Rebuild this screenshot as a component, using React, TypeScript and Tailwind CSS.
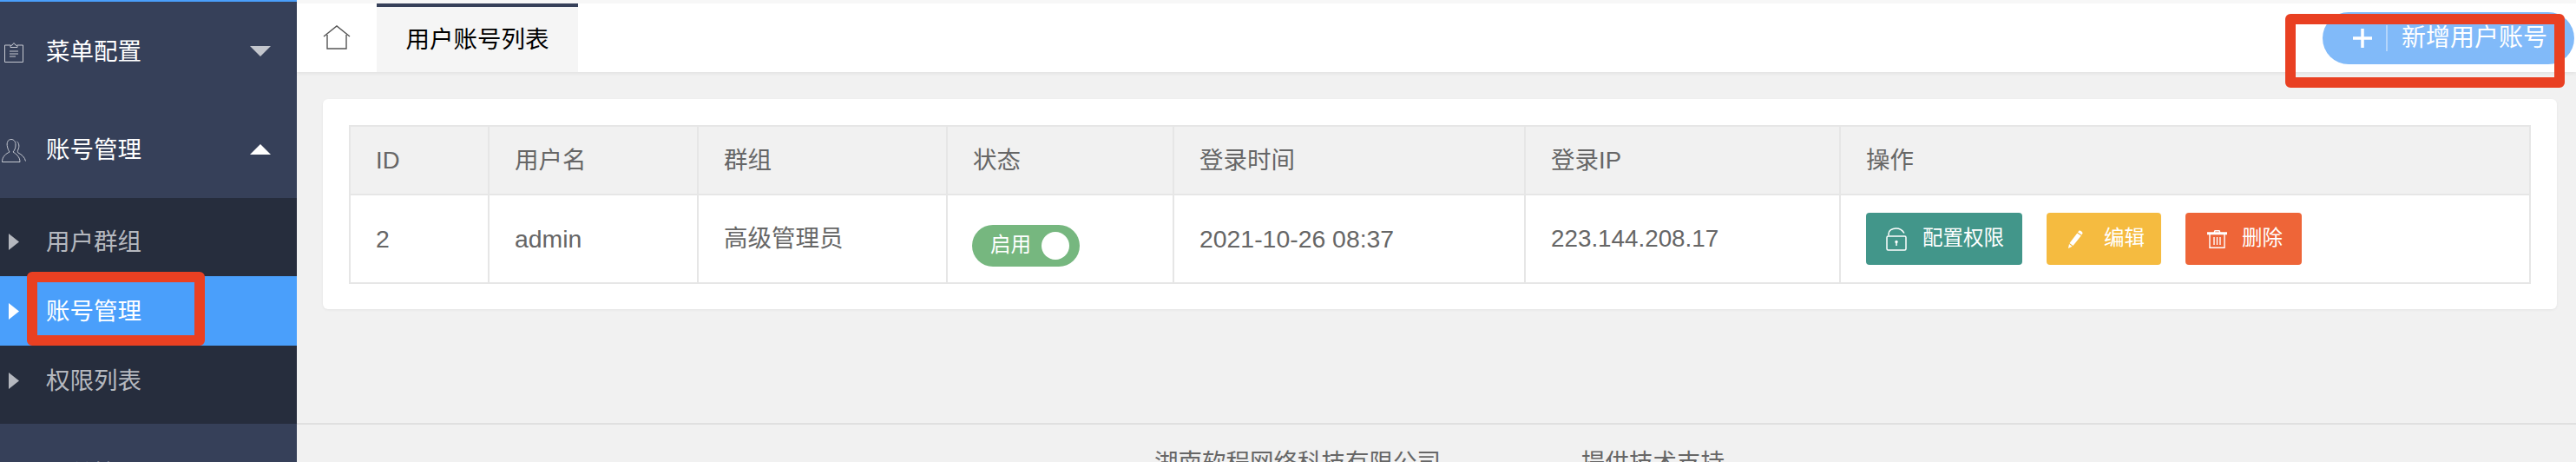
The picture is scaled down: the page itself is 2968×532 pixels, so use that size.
const font = { fontFamily: '"Liberation Sans", "Noto Sans CJK SC", sans-serif' };

const columns = [
  { label: "ID", width: "w-[160px]" },
  { label: "用户名", width: "w-[241px]" },
  { label: "群组", width: "w-[287px]" },
  { label: "状态", width: "w-[261px]" },
  { label: "登录时间", width: "w-[405px]" },
  { label: "登录IP", width: "w-[363px]" },
  { label: "操作", width: "" },
];

function Triangle({ up, dim }: { up?: boolean; dim?: boolean }) {
  return (
    <svg width="24" height="12" viewBox="0 0 24 12" className={dim ? "opacity-70" : ""}>
      <path d={up ? "M12 0 L24 12 H0 Z" : "M0 0 H24 L12 12 Z"} fill="#fff" />
    </svg>
  );
}

function SideIconClip() {
  return (
    <svg width="22" height="23" viewBox="0 0 22 23" fill="none" stroke="#c5c8d0" strokeWidth="1">
      <path d="M7 3 H0.5 V22.5 H21.5 V3 H15" />
      <path d="M7 5.5 V3.5 L9 3 L11 0.5 L13 3 L15 3.5 V5.5 Z" />
      <path d="M6 10 H16 M6 13 H16 M6 16 H13" />
    </svg>
  );
}

function SideIconUser() {
  return (
    <svg width="28" height="27" viewBox="0 0 28 27" fill="none" stroke="#c5c8d0" strokeWidth="1">
      <path d="M11 0.5 C6.5 0.5 5.5 5 6.5 9 C7 11.5 8 13.5 9 15 C5 17 0.5 20 0.5 26.5 H21 C21 20 16 17 13 15 C15 13 16 10 16 7 C16 3 14 0.5 11 0.5 Z" />
      <path d="M17.5 3 C20 4.5 20.5 9 19 12 C18 14 18 15 19 16 C23 18 26.5 21 27.5 25.5" />
    </svg>
  );
}

function SubItem({ label, active }: { label: string; active?: boolean }) {
  return (
    <div className={`flex h-[80px] items-center pl-[10px] ${active ? "bg-[#4a9ffb] text-white" : "text-[#b5b8bf]"}`}>
      <svg width="12" height="19" viewBox="0 0 12 19" className="shrink-0">
        <path d="M0 0 L12 9.5 L0 19 Z" fill={active ? "#fff" : "#b5b8bf"} />
      </svg>
      <span className="mt-[2px] ml-[31px]">{label}</span>
    </div>
  );
}

function Sidebar() {
  return (
    <aside className="flex h-[532px] w-[342px] shrink-0 flex-col overflow-hidden border-t-2 border-[#4a9ffb] bg-[#364059] text-[27.5px] text-white">
      <div className="flex h-[114px] shrink-0 items-center pr-[30px] pl-[5px]">
        <span className="mt-[3px] flex w-[48px] shrink-0"><SideIconClip /></span>
        <span className="mt-[2px] flex-1">菜单配置</span>
        <Triangle dim />
      </div>
      <div className="flex h-[112px] shrink-0 items-center pr-[30px] pl-[2px]">
        <span className="mt-[2px] flex w-[51px] shrink-0"><SideIconUser /></span>
        <span className="mt-[2px] flex-1">账号管理</span>
        <Triangle up />
      </div>
      <div className="flex h-[260px] shrink-0 flex-col bg-[#262d3d] pt-[10px]">
        <SubItem label="用户群组" />
        <SubItem label="账号管理" active />
        <SubItem label="权限列表" />
      </div>
      <div className="pt-[37px] pl-[53px]">订单管理</div>
    </aside>
  );
}

function LockIcon() {
  return (
    <svg width="24" height="27" viewBox="0 0 24 27" fill="none" stroke="#fff" strokeWidth="1.5">
      <path d="M3 9 V7 C3 3.5 7 1 11.5 1 C15.5 1 19 3 21 6.5" />
      <rect x="1" y="10" width="22" height="16" rx="1.5" />
      <circle cx="12" cy="16.5" r="1.7" fill="#fff" stroke="none" />
      <path d="M12 17 V21" />
    </svg>
  );
}

function PencilIcon() {
  return (
    <svg width="17" height="21" viewBox="0 0 17 21" fill="#fff">
      <path d="M12.5 0.5 C14 0 16.5 2 16.5 3.5 L15.5 5.5 L11 2.5 Z" />
      <path d="M10.3 3.5 L14.8 6.5 L5.5 18 L1.5 15 Z" />
      <path d="M1 16 L4.5 18.7 L0 21 Z" />
    </svg>
  );
}

function TrashIcon() {
  return (
    <svg width="23" height="21" viewBox="0 0 23 21" fill="none" stroke="#fff" strokeWidth="1.4">
      <path d="M0.5 4.5 V3 H22.5 V4.5 Z M8 3 L9 0.7 H14 L15 3" />
      <path d="M3 5 V20.3 H20 V5" />
      <path d="M8 8 V17 M11.5 8 V17 M15 8 V17" />
    </svg>
  );
}

function ActionButton({ icon, label, className }: { icon: React.ReactNode; label: string; className: string }) {
  return (
    <button className={`flex h-[60px] items-center rounded-[4px] text-[23.5px] text-white ${className}`}>
      {icon}
      {label}
    </button>
  );
}

function Table() {
  const cell = "border-2 border-[#e6e6e6] pl-[29px]";
  return (
    <table className="w-full table-fixed border-collapse text-[27.5px] text-[#666]">
      <thead>
        <tr className="h-[79px] bg-[#f1f1f1]">
          {columns.map((c) => (
            <th key={c.label} className={`border-2 border-[#e6e6e6] pl-[29px] text-left font-normal ${c.width}`}>
              {c.label}
            </th>
          ))}
        </tr>
      </thead>
      <tbody>
        <tr className="h-[102px]">
          <td className={`${cell} text-[28.4px]`}>2</td>
          <td className={`${cell} text-[28.4px]`}>admin</td>
          <td className={cell}>高级管理员</td>
          <td className="border-2 border-[#e6e6e6] pl-[28px]">
            <div className="mt-[16px] flex h-[48px] w-[124px] items-center rounded-full bg-[#76b77f] pl-[21px] text-[23.5px] text-white">
              启用
              <span className="ml-[12px] h-[32px] w-[32px] rounded-full bg-white" />
            </div>
          </td>
          <td className={`${cell} text-[28.4px]`}>2021-10-26 08:37</td>
          <td className={`${cell} text-[27.8px]`}>223.144.208.17</td>
          <td className={cell}>
            <div className="flex gap-[28px]">
              <ActionButton icon={<LockIcon />} label="配置权限" className="w-[180px] gap-[18px] bg-[#42968a] pl-[23px]" />
              <ActionButton icon={<PencilIcon />} label="编辑" className="w-[132px] gap-[24px] bg-[#f5bb40] pl-[25px]" />
              <ActionButton icon={<TrashIcon />} label="删除" className="w-[134px] gap-[17px] bg-[#ee6538] pl-[25px]" />
            </div>
          </td>
        </tr>
      </tbody>
    </table>
  );
}

export default function App() {
  return (
    <div className="relative flex h-[532px] w-[2968px] overflow-hidden bg-[#f1f1f1]" style={font}>
      <Sidebar />
      <main className="flex min-w-0 flex-1 flex-col">
        <div className="h-[4px] shrink-0 bg-[#f7f7f7]" />
        <header className="flex h-[79px] shrink-0 items-stretch bg-white pl-[30px] shadow-[0_2px_4px_rgba(0,0,0,0.06)]">
          <svg width="32" height="28" viewBox="0 0 32 28" fill="none" stroke="#555" strokeWidth="1.4" className="mt-[25px] shrink-0">
            <path d="M1 13 L16 1 L31 13 M5 11 V27 H27 V11" />
          </svg>
          <div className="ml-[30px] flex w-[232px] items-center justify-center border-t-4 border-[#364059] bg-[#f5f5f5] text-[27.5px] text-black">
            用户账号列表
          </div>
          <div className="flex-1" />
          <div className="mt-[10px] flex h-[60px] w-[290px] items-center rounded-full bg-[#81baf9] pl-[35px] text-[28px] text-white">
            <svg width="22" height="22" viewBox="0 0 22 22" stroke="#fff" strokeWidth="3.5">
              <path d="M0 11 H22 M11 0 V22" />
            </svg>
            <span className="ml-[16px] h-[30px] w-[2px] bg-white/40" />
            <span className="ml-[16px]">新增用户账号</span>
          </div>
          <div className="w-[2px]" />
        </header>
        <section className="mt-[31px] mr-[22px] ml-[30px] h-[242px] shrink-0 rounded-[6px] bg-white px-[30px] pt-[30px] shadow-[0_1px_3px_rgba(0,0,0,0.06)]">
          <Table />
        </section>
        <footer className="mt-[131px] flex flex-1 gap-[162px] overflow-hidden border-t-2 border-[#e0e0e0] pt-[23px] pl-[988px] text-[27.5px] whitespace-nowrap text-[#666]">
          <span>湖南软程网络科技有限公司</span>
          <span>提供技术支持</span>
        </footer>
      </main>
      <div className="absolute top-[313px] left-[31px] h-[85px] w-[205px] rounded-[6px] border-[12px] border-[#e94022]" />
      <div className="absolute top-[16px] left-[2633px] h-[85px] w-[322px] rounded-[6px] border-[12px] border-[#e94022]" />
    </div>
  );
}
